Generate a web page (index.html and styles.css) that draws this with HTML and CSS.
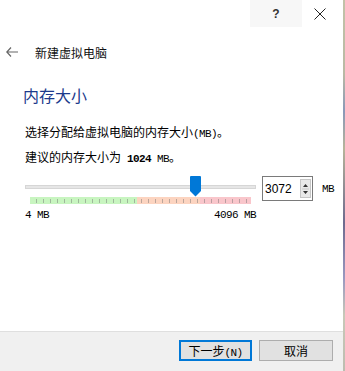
FILE: index.html
```html
<!DOCTYPE html>
<html lang="zh">
<head>
  <meta charset="UTF-8">
  <title>新建虚拟电脑</title>
  <link rel="stylesheet" href="styles.css">
</head>
<body>

<div class="pantalla">
  <div class="ventana">

    <div class="barra">
      <div class="btn-ayuda">?</div>
      <div class="btn-cerrar">
        <svg width="12" height="12" viewBox="0 0 12 12">
          <path d="M0.5 0.5 L11.5 11.5 M11.5 0.5 L0.5 11.5" stroke="#222" stroke-width="1" fill="none"/>
        </svg>
      </div>
    </div>

    <div class="cabecera">
      <svg class="flecha" width="12" height="10" viewBox="0 0 12 10">
        <path d="M5 0.5 L0.8 5 L5 9.5 M0.8 5 H12" stroke="#666" stroke-width="1.2" fill="none"/>
      </svg>
      <span class="titulo">新建虚拟电脑</span>
    </div>

    <div class="contenido">
      <h1 class="encabezado">内存大小</h1>
      <p class="linea">选择分配给虚拟电脑的内存大小<span class="en">(MB)</span>。</p>
      <p class="linea linea2">建议的内存大小为<span class="en"> <b>1024</b> MB</span>。</p>

      <div class="fila-slider">
        <div class="slider">
          <div class="zona-pista">
            <div class="pista"></div>
            <svg class="pulgar" width="11" height="21" viewBox="0 0 11 21">
              <path d="M0 1 Q0 0 1 0 H10 Q11 0 11 1 V15 L5.5 20.5 L0 15 Z" fill="#0078d7"/>
            </svg>
          </div>
          <div class="marcas"></div>
          <div class="etiquetas">
            <span class="en">4 MB</span>
            <span class="en">4096 MB</span>
          </div>
        </div>

        <div class="spinbox">
          <span class="valor">3072</span>
          <div class="flechas">
            <svg width="9" height="16" viewBox="0 0 9 16">
              <path d="M4.5 3 L7 6 H2 Z M4.5 13 L7 10 H2 Z" fill="#333"/>
              <path d="M1 8 H8" stroke="#c8c8c8" stroke-width="1"/>
            </svg>
          </div>
        </div>
        <span class="en unidad">MB</span>
      </div>
    </div>

    <div class="pie">
      <button class="boton principal">下一步<span class="en">(N)</span></button>
      <button class="boton">取消</button>
    </div>

  </div>
  <div class="borde"></div>
</div>

</body>
</html>
```

FILE: styles.css
```css
* {
  margin: 0;
  padding: 0;
  box-sizing: border-box;
}

body {
  background: white;
  font-family: "Noto Sans CJK SC", sans-serif;
  font-size: 12px;
  color: #000;
}

.pantalla {
  display: flex;
  width: 345px;
  height: 371px;
}

.ventana {
  width: 343px;
  height: 371px;
  display: flex;
  flex-direction: column;
  background: white;
}

.borde {
  width: 2px;
  background: linear-gradient(#c2c2a8 0%, #b9b9a4 20%, #8a98b8 30%, #b7b49a 40%, #6e6a8e 60%, #9a98c0 75%, #c8c8b8 85%, #bdbdb0 100%);
}

/* barra de titulo */
.barra {
  height: 27px;
  display: flex;
  justify-content: flex-end;
  padding-right: 6px;
}

.btn-ayuda {
  width: 52px;
  background: #f7f7f7;
  display: flex;
  align-items: center;
  justify-content: center;
  font-family: "Liberation Sans", sans-serif;
  font-weight: bold;
  font-size: 12px;
  color: #333;
}

.btn-cerrar {
  width: 35px;
  display: flex;
  align-items: center;
  justify-content: center;
}

/* cabecera */
.cabecera {
  height: 50px;
  display: flex;
  align-items: center;
  padding-left: 6px;
}

.flecha {
  margin-right: 17px;
}

.titulo {
  font-size: 12px;
  color: #111;
}

/* contenido */
.contenido {
  padding-left: 25px;
}

.encabezado {
  margin-top: 8px;
  margin-left: -2px;
  font-size: 16px;
  line-height: 20px;
  font-weight: normal;
  color: #1c3a8c;
}

.linea {
  margin-top: 19px;
  line-height: 16px;
  font-size: 12px;
}

.linea2 {
  margin-top: 7px;
}

.en {
  font-family: "Liberation Mono", monospace;
  font-size: 11px;
  letter-spacing: -0.6px;
}

.fila-slider {
  margin-top: 9px;
  display: flex;
  align-items: flex-start;
}

.slider {
  width: 231px;
}

.zona-pista {
  position: relative;
  height: 21px;
  display: flex;
  align-items: center;
}

.pista {
  width: 100%;
  height: 4px;
  background: #e6e6e6;
  border: 1px solid #d6d6d6;
}

.pulgar {
  position: absolute;
  left: 165px;
  top: 0;
}

.marcas {
  margin: 0 5px;
  height: 7px;
  background:
    repeating-linear-gradient(to right, transparent 0, transparent 6px, rgba(110, 110, 110, 0.45) 6px, rgba(110, 110, 110, 0.45) 7px),
    linear-gradient(to right, #c8f5c0 0, #c8f5c0 107px, #fcd4c0 107px, #fcd4c0 170px, #f9c6cb 170px);
  background-size: 221px 4px, 100% 100%;
  background-position: 0 2px, 0 0;
  background-repeat: no-repeat;
}

.etiquetas {
  margin-top: 5px;
  display: flex;
  justify-content: space-between;
  line-height: 12px;
}

.spinbox {
  margin-left: 6px;
  width: 51px;
  height: 25px;
  border: 1px solid #7a7a7a;
  display: flex;
  align-items: center;
  justify-content: space-between;
  padding-left: 2px;
  padding-right: 1px;
}

.valor {
  font-family: "Liberation Sans", sans-serif;
  font-size: 12px;
  color: #000;
}

.flechas {
  width: 11px;
  height: 19px;
  background: #e8e8e8;
  border: 1px solid #c6c6c6;
  display: flex;
  align-items: center;
  justify-content: center;
}

.unidad {
  margin-left: 9px;
  margin-top: 7px;
}

/* pie */
.pie {
  margin-top: auto;
  height: 40px;
  border-top: 1px solid #dfdfdf;
  background: #f0f0f0;
  display: flex;
  justify-content: flex-end;
  align-items: flex-start;
  padding-top: 8px;
  padding-right: 10px;
  gap: 7px;
}

.boton {
  width: 74px;
  height: 21px;
  background: #e1e1e1;
  border: 1px solid #adadad;
  font-family: "Noto Sans CJK SC", sans-serif;
  font-size: 12px;
  color: #000;
}

.principal {
  width: 73px;
  border: 1px solid #0078d7;
  box-shadow: inset 0 0 0 1px #0078d7;
}
```
